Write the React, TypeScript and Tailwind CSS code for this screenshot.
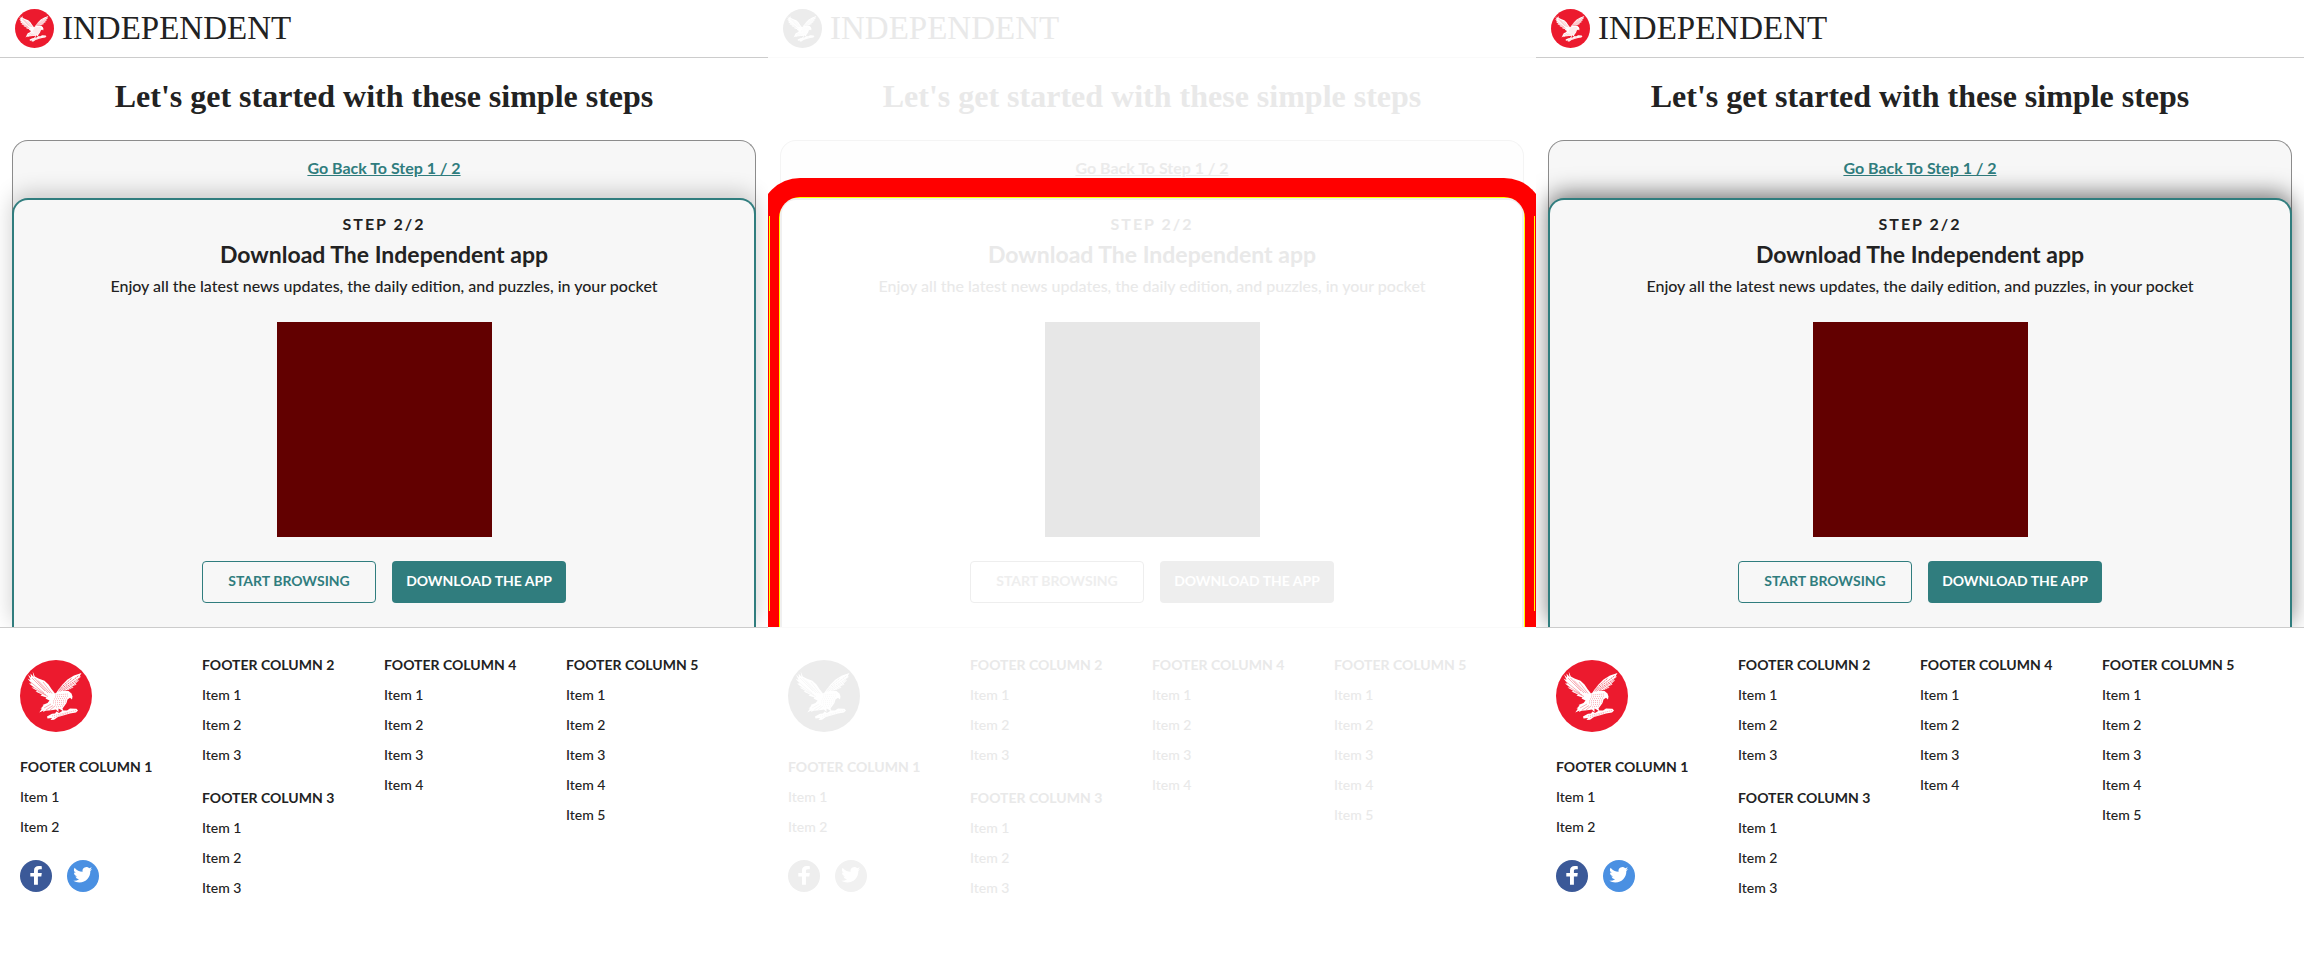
import React from "react";

type Variant = "before" | "diff" | "after";

const columns = [
  { title: "FOOTER COLUMN 2", items: 3 },
  { title: "FOOTER COLUMN 3", items: 3 },
  { title: "FOOTER COLUMN 4", items: 4 },
  { title: "FOOTER COLUMN 5", items: 5 },
];

function Eagle({ className, diff }: { className: string; diff: boolean }) {
  const disc = diff ? "#ececec" : "#ec1a2e";
  return (
    <svg viewBox="0 0 72 72" className={className} aria-hidden="true">
      <circle cx="36" cy="36" r="36" fill={disc} />
      <g fill="#fff">
        <path d="M12.700 11.500L14.800 16.500L18.500 18.500L24.500 20.800L28.500 24.500L31.500 29L35 33.500L38 31.500L44 30.500L48.500 31L51.500 33.500L52.500 36.500L52 39.500L50 37.800L47.500 39.500L46.500 43L44 46.500L42.500 48.500L43.500 51.500L40.500 49.500L38.500 48.500L38.500 52L36 49.500L33 50L29 50.500L25.500 50.800L23 52L23.500 50.500L19.300 52.500L22 48.500L20.500 48.800L23.500 45.500L22.500 45L27.500 43L29.500 40.500L25.500 38.500L26.500 37.500L20.500 35.500L22 34.500L15.500 31.500L17.500 31L11.500 27.500L14 27.500L9 23.500L11.500 23.500L7.500 18.500L10.500 20L8 14.500L11 17.500L10.500 13.500L13.500 17Z" />
        <path d="M61.500 13L54 15.500L47.500 19.500L42.500 24.500L38.500 29.500L36.500 32.500L44 30.500L48.500 30L53.500 27.500L52.500 26.500L56.500 24.500L55.500 23.500L59 20.500L57.500 20L61 16.500L59.500 16.500Z" />
        <path d="M27 56.500L32 53.800L35 53.500L36.500 51.500L39 53L43 50.500L47 50.500L50 48.500L56.500 48.800L58 50.500L56 52.500L50 53.500L45 55L38 57L34 59.800L30.500 60L32 58L27.500 58.500Z" />
      </g>
      <g stroke={disc} strokeWidth="0.350" fill="none">
        <path d="M12 18L25 31M10.500 22L24 33M14.500 18L28 33M18 20.500L30 33M23 22L32 33.500M13 27L26 35M17.500 31L28 36.500M24 48L31 44M26 50L33 45.500M30 50L35 46" />
        <path d="M38.500 31L59 15.500M40.500 31L60 17.500M43.500 30.500L58 20.500M46.500 30.500L56.500 23.500M49 30L54 26.500M39.500 29L52 18" strokeWidth="0.650" strokeDasharray="1.600 0.700" />
      </g>
      <g stroke={disc} strokeWidth="0.500" strokeDasharray="0.700 1.300" fill="none">
        <path d="M35.500 35L48 34M35 37L49 36M34 39L48 38M33 41L47 40M33 43L46 42M35 45L45 44M36 47L43 46M32 56L56 50.500M34 57.500L48 53" />
      </g>
    </svg>
  );
}

function Facebook({ diff }: { diff: boolean }) {
  return (
    <svg viewBox="0 0 32 32" className="size-8" aria-hidden="true">
      <circle cx="16" cy="16" r="16" fill={diff ? "#eeeeee" : "#3b5998"} />
      <path fill="#fff" d="M14 24.800v-8.300h-3.700v-3.500H14v-2.300c0-3.200 1.700-4.700 4.800-4.700 1.100 0 2.100.1 3 .3v3h-1.900c-1.600 0-2 .7-2 1.900v1.800h3.900l-.5 3.500h-3.400v8.300z" />
    </svg>
  );
}

function Twitter({ diff }: { diff: boolean }) {
  return (
    <svg viewBox="0 0 32 32" className="size-8" aria-hidden="true">
      <circle cx="16" cy="16" r="16" fill={diff ? "#f1f1f1" : "#4a90e2"} />
      <g transform="translate(6.300 5.300) scale(0.790)">
        <path fill="#fff" d="M23.950 4.570a10 10 0 0 1-2.820.77 4.960 4.960 0 0 0 2.160-2.720 9.900 9.900 0 0 1-3.120 1.190 4.920 4.920 0 0 0-8.380 4.480A13.900 13.900 0 0 1 1.640 3.160a4.920 4.920 0 0 0 1.520 6.570 4.900 4.900 0 0 1-2.230-.61v.06a4.920 4.920 0 0 0 3.950 4.830 5 5 0 0 1-2.210.08 4.940 4.940 0 0 0 4.600 3.420A9.870 9.870 0 0 1 0 19.540a13.900 13.900 0 0 0 7.550 2.210c9.050 0 14-7.500 14-13.980 0-.21 0-.42-.02-.63a9.900 9.900 0 0 0 2.420-2.570z" />
      </g>
    </svg>
  );
}

function FooterList({ title, items, ink }: { title: string; items: number; ink: string }) {
  return (
    <section className={`mb-[23px] text-[14px] leading-5 ${ink}`}>
      <h3 className="mb-[10px] font-bold whitespace-nowrap">{title}</h3>
      <ul className="flex flex-col gap-[10px]">
        {Array.from({ length: items }, (_, i) => (
          <li key={i} className="font-medium">
            <a href="#">Item {i + 1}</a>
          </li>
        ))}
      </ul>
    </section>
  );
}

const cardStyle: Record<Variant, string> = {
  before: "border-[#307d7e] bg-[#f7f7f7] shadow-[0_-5px_22px_rgba(0,0,0,0.2)]",
  diff: "border-[#f0f0f0] bg-white shadow-[0_0_0_1px_#ffff00,0_0_0_10px_#ff0000]",
  after: "border-[#307d7e] bg-[#f7f7f7] shadow-[0_-5px_22px_rgba(0,0,0,0.5)]",
};

function Panel({ variant }: { variant: Variant }) {
  const diff = variant === "diff";
  const ink = diff ? "text-[#e9e9e9]" : "text-[#222222]";
  const line = diff ? "border-[#fafafa]" : "border-[#cccccc]";
  return (
    <div className={`min-w-0 overflow-hidden bg-white ${ink}`}>
      <header className={`flex h-[58px] items-center gap-2 border-b px-[15px] ${line}`}>
        <Eagle className="size-[39px]" diff={diff} />
        <span className="font-['Liberation_Serif',serif] text-[33px] leading-none">INDEPENDENT</span>
      </header>
      <main className={`overflow-hidden border-b px-3 ${line}`}>
        <h1 className="pt-[18px] pb-6 text-center font-['Liberation_Serif',serif] text-[32px] leading-10 font-bold">
          Let's get started with these simple steps
        </h1>
        <div className={`rounded-t-2xl border border-b-0 pb-4 text-center ${diff ? "border-[#f4f4f4] bg-[#fefefe]" : "border-[#8c8c8c] bg-[#f7f7f7]"}`}>
          <a href="#" className={`inline-block pt-[15px] pb-[18px] text-[16px] leading-6 font-bold underline ${diff ? "text-[#ebebeb]" : "text-[#307d7e]"}`}>
            Go Back To Step 1 / 2
          </a>
        </div>
        <section className={`relative -mt-4 flex flex-col items-center rounded-t-2xl border-2 border-b-0 pt-3 pb-6 ${cardStyle[variant]}`}>
          {diff && (
            <>
              <span className="absolute -inset-x-[22px] -top-[22px] bottom-0 rounded-t-[40px] border-[19px] border-b-0 border-[#ff0000]" />
              <span className="absolute top-4 bottom-4 -left-[13px] w-px bg-[#ffff00]" />
              <span className="absolute top-4 -right-[13px] bottom-4 w-px bg-[#ffff00]" />
            </>
          )}
          <p className="text-[16px] leading-6 font-bold tracking-[2px]">STEP 2/2</p>
          <h2 className="mt-[2px] text-[23px] leading-8 font-bold">Download The Independent app</h2>
          <p className="mt-1 text-[16px] leading-6 font-medium">
            Enjoy all the latest news updates, the daily edition, and puzzles, in your pocket
          </p>
          <div className={`mt-6 size-[215px] ${diff ? "bg-[#e7e7e7]" : "bg-[#620000]"}`} />
          <div className="mt-6 flex gap-4 text-[14px] font-bold">
            <button className={`h-[42px] w-[174px] rounded border pb-1 ${diff ? "border-[#eeeeee] text-[#eeeeee]" : "border-[#307d7e] text-[#307d7e]"}`}>START BROWSING</button>
            <button className={`h-[42px] w-[174px] rounded pb-1 text-white ${diff ? "bg-[#eeeeee]" : "bg-[#307d7e]"}`}>DOWNLOAD THE APP</button>
          </div>
        </section>
      </main>
      <footer className="grid grid-cols-4 px-5 pt-[27px]">
        <div className="pt-[5px]">
          <Eagle className="mb-[25px] size-[72px]" diff={diff} />
          <FooterList title="FOOTER COLUMN 1" items={2} ink={ink} />
          <div className="flex gap-[15px]">
            <a href="#" aria-label="Facebook"><Facebook diff={diff} /></a>
            <a href="#" aria-label="Twitter"><Twitter diff={diff} /></a>
          </div>
        </div>
        <div>
          <FooterList {...columns[0]} ink={ink} />
          <FooterList {...columns[1]} ink={ink} />
        </div>
        <FooterList {...columns[2]} ink={ink} />
        <FooterList {...columns[3]} ink={ink} />
      </footer>
    </div>
  );
}

export default function App() {
  return (
    <div className="grid min-h-screen grid-cols-3 bg-white font-['Lato',sans-serif]">
      <Panel variant="before" />
      <Panel variant="diff" />
      <Panel variant="after" />
    </div>
  );
}
